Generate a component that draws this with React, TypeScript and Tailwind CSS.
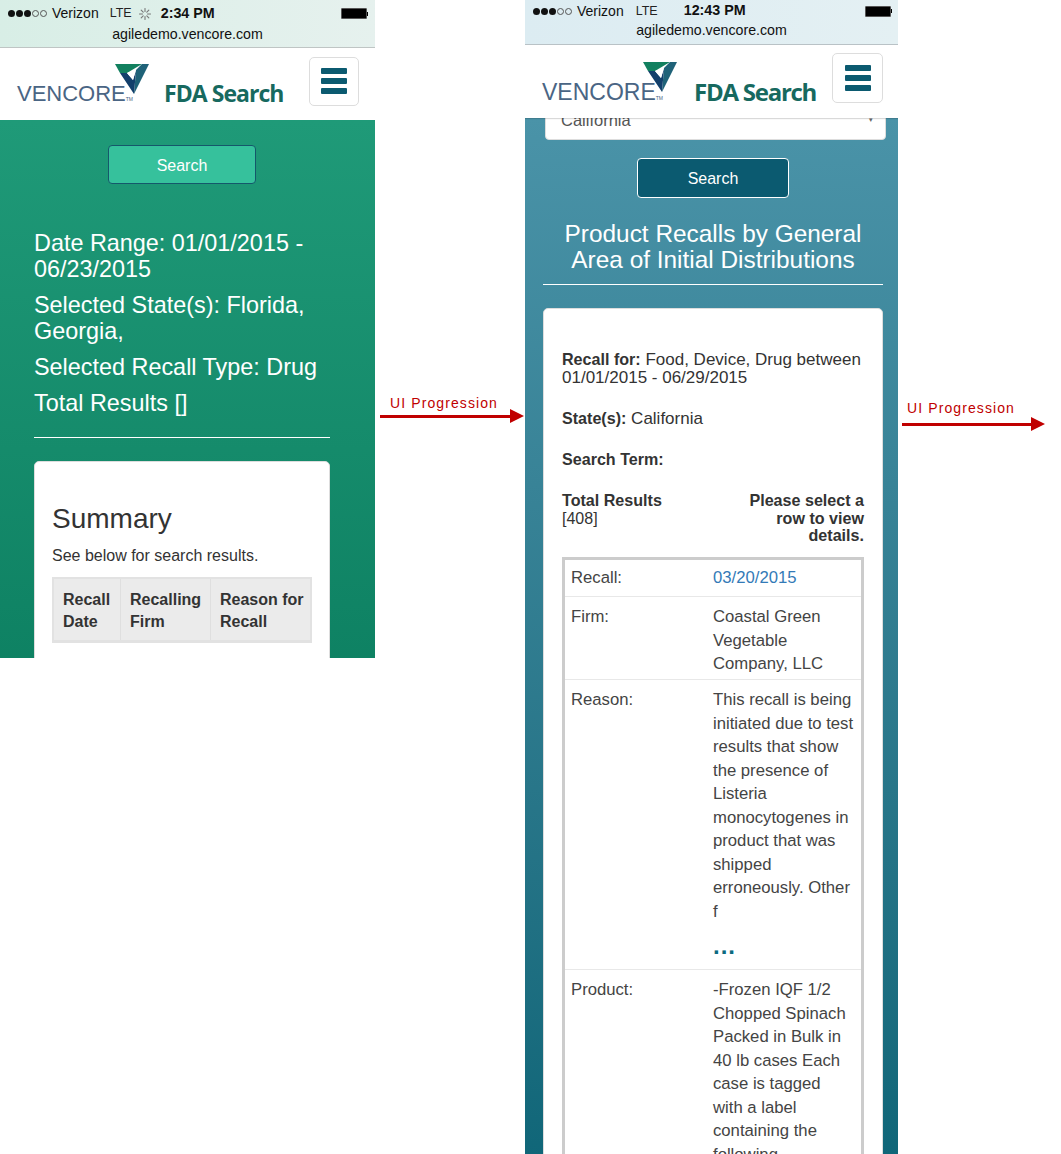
import React from 'react';

function VencoreMark({ className }: { className: string }) {
  return (
    <svg viewBox="0 0 34 30" className={className}>
      <polygon points="0,0 27,0 12,9 5,9" fill="#12805f" />
      <polygon points="27,0 34,0 19,30 21,6" fill="#1f6278" />
      <polygon points="5,9 12,9 18,16 21,6 19,30" fill="#123f6b" />
      <polygon points="12,9 21,6 18,16" fill="#ffffff" />
    </svg>
  );
}

function MenuButton({ className }: { className: string }) {
  return (
    <button type="button" className={`flex flex-col items-center justify-center gap-1 rounded-[5px] border border-[#dddddd] bg-white ${className}`}>
      <span className="h-[6px] w-[26px] rounded-[1px] bg-[#0b5a70]" />
      <span className="h-[6px] w-[26px] rounded-[1px] bg-[#0b5a70]" />
      <span className="h-[6px] w-[26px] rounded-[1px] bg-[#0b5a70]" />
    </button>
  );
}

function SignalDots() {
  return (
    <span className="flex items-center gap-px">
      <span className="h-[7px] w-[7px] rounded-full bg-[#111111]" />
      <span className="h-[7px] w-[7px] rounded-full bg-[#111111]" />
      <span className="h-[7px] w-[7px] rounded-full bg-[#111111]" />
      <span className="h-[7px] w-[7px] rounded-full border border-[#555555]" />
      <span className="h-[7px] w-[7px] rounded-full border border-[#555555]" />
    </span>
  );
}

function Battery({ className }: { className: string }) {
  return (
    <div className={`flex items-center ${className}`}>
      <div className="h-[11px] w-[26px] rounded-[1px] border border-[#555555] bg-black" />
      <div className="h-1 w-[1px] bg-black" />
    </div>
  );
}

function Spinner() {
  return (
    <svg viewBox="0 0 12 12" className="ml-[7px] h-3 w-3" stroke="#777777" strokeWidth="1.1" strokeLinecap="round">
      <path d="M6 .5v3M6 8.5v3M.5 6h3M8.5 6h3M2.2 2.2l2 2M7.8 7.8l2 2M2.2 9.8l2-2M7.8 4.2l2-2" />
    </svg>
  );
}

function Progression({ width, marginTop, gap, labelPad }: { width: string; marginTop: string; gap: string; labelPad: string }) {
  return (
    <div className={`flex shrink-0 flex-col ${width} ${marginTop}`}>
      <span className={`text-[14px] leading-4 tracking-[1.1px] text-[#c00000] ${labelPad}`}>UI Progression</span>
      <div className={`flex items-center ${gap}`}>
        <div className="h-[3px] flex-1 bg-[#c00000]" />
        <div className="h-0 w-0 border-y-[7px] border-l-[14px] border-y-transparent border-l-[#c00000]" />
      </div>
    </div>
  );
}

function Row({ label, pad, children }: { label: string; pad: string; children: React.ReactNode }) {
  return (
    <div className={`flex pl-[6px] ${pad}`}>
      <div className="w-[142px] shrink-0 leading-[23.5px]">{label}</div>
      <div className="w-[141px] leading-[23.5px]">{children}</div>
    </div>
  );
}

export default function App() {
  return (
    <div className="flex h-[1154px] w-[1061px] items-start overflow-hidden bg-white font-['Liberation_Sans',Arial,sans-serif] text-[#333333]">
      {/* first phone */}
      <div className="flex h-[658px] w-[375px] shrink-0 flex-col overflow-hidden">
        <div className="h-[48px] shrink-0 border-b border-[#bfc5c4] bg-gradient-to-r from-[#d8eee6] to-[#e6f1ee] pt-[2px] text-[#111111]">
          <div className="flex h-[23px] items-center pl-2 pr-[7px] text-[14px]">
            <SignalDots />
            <span className="ml-[5px]">Verizon</span>
            <span className="ml-[11px] text-[12.5px] text-[#222222]">LTE</span>
            <Spinner />
            <span className="ml-[10px] text-[14.3px] font-bold">2:34 PM</span>
            <Battery className="ml-auto" />
          </div>
          <div className="pt-px text-center text-[14.2px] leading-[16px]">agiledemo.vencore.com</div>
        </div>
        <div className="relative flex h-[72px] shrink-0 items-center bg-white">
          <span className="ml-[17px] mt-[18px] w-[147px] text-[22px] font-normal text-[#4a6584]">VENCORE<span className="align-baseline text-[5px]">TM</span></span>
          <VencoreMark className="absolute left-[115px] top-[16px] h-[30px] w-[34px]" />
          <span className="mt-[19px] font-['Open_Sans',sans-serif] text-[23px] font-bold tracking-[-0.95px] text-[#17695f]">FDA Search</span>
          <MenuButton className="ml-auto mr-4 mt-[-6px] h-[49px] w-[50px]" />
        </div>
        <div className="flex-1 bg-gradient-to-b from-[#1f9a78] to-[#0a7d5f] pl-[34px] pr-[45px] pt-[25px]">
          <button type="button" className="mx-auto block h-[39px] w-[148px] rounded-[4px] border border-[#15586b] bg-[#36c19c] pt-[2px] text-base text-white">Search</button>
          <div className="mt-[46px] text-[23.4px] leading-[26px] text-white">
            <p>Date Range: 01/01/2015 - 06/23/2015</p>
            <p className="mt-[10px]">Selected State(s): Florida, Georgia,</p>
            <p className="mt-[10px]">Selected Recall Type: Drug</p>
            <p className="mt-[10px]">Total Results []</p>
          </div>
          <div className="mt-[21px] h-px bg-white" />
          <div className="mt-[23px] h-[300px] rounded-[5px] border border-[#dddddd] bg-white px-[17px] pt-[39px]">
            <h2 className="text-[28px] leading-[35px]">Summary</h2>
            <p className="mt-[10px] text-[16px] leading-[20px]">See below for search results.</p>
            <div className="mt-[11px] grid h-[66px] w-[260px] grid-cols-[67px_90px_99px] border-2 border-b-[3px] border-[#e2e2e2] bg-[#ebebeb] text-[16px] font-bold leading-[22px]">
              <div className="border-r border-[#dfdfdf] pl-[9px] pt-[10px]">Recall Date</div>
              <div className="border-r border-[#dfdfdf] pl-[9px] pt-[10px]">Recalling Firm</div>
              <div className="pl-[9px] pt-[10px]">Reason for Recall</div>
            </div>
          </div>
        </div>
      </div>

      <Progression width="ml-[5px] w-[144px]" marginTop="mt-[395px]" gap="-mt-0.5" labelPad="pl-[10px]" />

      {/* second phone */}
      <div className="ml-px flex h-[1154px] w-[373px] shrink-0 flex-col overflow-hidden">
        <div className="h-[45px] shrink-0 border-b border-[#b9c2c6] bg-gradient-to-r from-[#dcecf2] to-[#e4f0f3] text-[#111111]">
          <div className="flex h-[21px] items-center pl-2 pr-[6px] pt-px text-[14px]">
            <SignalDots />
            <span className="ml-[5px]">Verizon</span>
            <span className="ml-3 text-[12.5px] text-[#222222]">LTE</span>
            <span className="ml-[26px] text-[14.3px] font-bold">12:43 PM</span>
            <Battery className="ml-auto" />
          </div>
          <div className="pt-px text-center text-[14.2px] leading-[16px]">agiledemo.vencore.com</div>
        </div>
        <div className="relative z-10 flex h-[73px] shrink-0 items-center bg-white shadow-[0_1px_1px_rgba(0,0,0,0.15)]">
          <span className="ml-[17px] mt-[22px] w-[152px] text-[23px] text-[#4a6584]">VENCORE<span className="align-baseline text-[5px]">TM</span></span>
          <VencoreMark className="absolute left-[118px] top-[17px] h-[30px] w-[34px]" />
          <span className="mt-[20px] font-['Open_Sans',sans-serif] text-[24px] font-bold tracking-[-1.25px] text-[#17695f]">FDA Search</span>
          <MenuButton className="ml-auto mr-[15px] mt-[-8px] h-[50px] w-[51px]" />
        </div>
        <div className="flex-1 bg-gradient-to-b from-[#4a93a8] to-[#0f6678] pl-[18px] pr-[15px]">
          <div className="relative ml-[2px] -mr-[3px] -mt-[19px] flex h-[41px] items-center justify-between rounded-[4px] border border-[#dddddd] bg-white pl-[15px] pr-3 pt-[2px] text-[16.5px] text-[#555555]">
            <span>California</span>
            <span className="text-[7px] text-[#666666]">▾</span>
          </div>
          <button type="button" className="mx-auto mt-[18px] block h-[40px] w-[152px] rounded-[4px] border border-white bg-[#0b5a70] pt-px text-base text-white">Search</button>
          <h1 className="mt-[23px] text-center text-[24.4px] leading-[26px] text-white">Product Recalls by General Area of Initial Distributions</h1>
          <div className="mt-[11px] h-px bg-white" />
          <div className="mt-[23px] rounded-[5px] border border-[#dddddd] bg-white px-[18px] pt-[42px] text-[17px]">
            <p className="leading-[17.5px]"><b className="text-[16.1px]">Recall for:</b> Food, Device, Drug between 01/01/2015 - 06/29/2015</p>
            <p className="mt-[24px] leading-[17.5px]"><b className="text-[16.1px]">State(s):</b> California</p>
            <p className="mt-[23.5px] leading-[17.5px]"><b className="text-[16.1px]">Search Term:</b></p>
            <div className="mt-[23.5px] flex justify-between leading-[17.5px]">
              <div><b className="text-[16.1px]">Total Results</b><br /><span className="text-[16px]">[408]</span></div>
              <div className="w-[130px] text-right text-[16.1px] font-bold">Please select a row to view details.</div>
            </div>
            <div className="mt-[12px] w-[302px] border-[3px] border-b-0 border-[#cccccc] text-[16.7px] text-[#444444]">
              <Row label="Recall:" pad="border-b border-[#e8e8e8] pb-[7px] pt-[6px]"><span className="text-[#337ab7]">03/20/2015</span></Row>
              <Row label="Firm:" pad="border-b border-[#e8e8e8] pb-[3.5px] pt-[8px]">Coastal Green Vegetable Company, LLC</Row>
              <Row label="Reason:" pad="border-b border-[#e8e8e8] pb-[6px] pt-[8px]">
                This recall is being initiated due to test results that show the presence of Listeria monocytogenes in product that was shipped erroneously. Other f
                <div className="mt-[13px] h-[27px] text-[24px] font-bold leading-[20px] tracking-[1px] text-[#0b6a80]">...</div>
              </Row>
              <Row label="Product:" pad="pt-[8px]">-Frozen IQF 1/2 Chopped Spinach Packed in Bulk in 40 lb cases Each case is tagged with a label containing the following</Row>
            </div>
          </div>
        </div>
      </div>

      <Progression width="ml-1 w-[143px]" marginTop="mt-[400px]" gap="mt-px" labelPad="pl-[5px]" />
    </div>
  );
}
